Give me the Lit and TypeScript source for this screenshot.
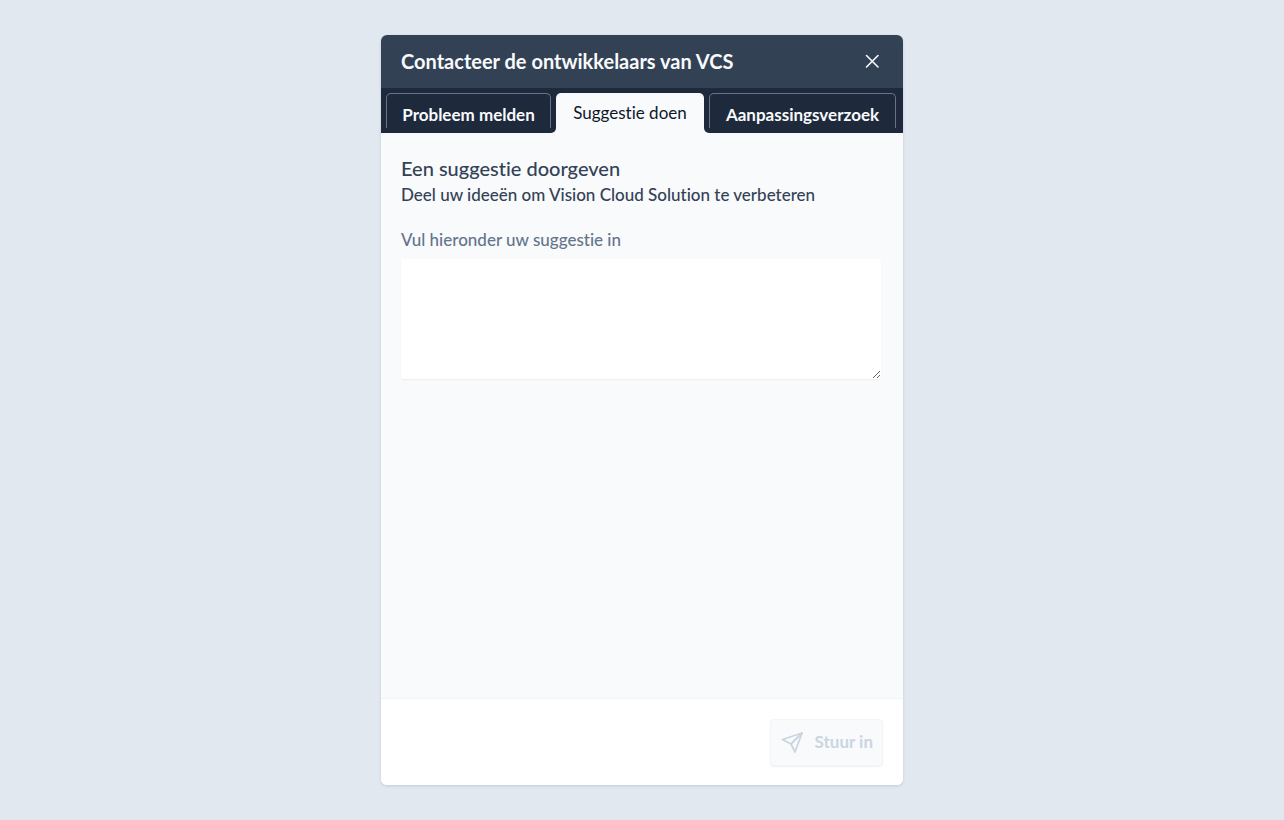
import { LitElement, html, css } from "lit";
import { customElement, state } from "lit/decorators.js";

@customElement("app-root")
export class AppRoot extends LitElement {
  static styles = css`
    :host {
      display: flex;
      justify-content: center;
      box-sizing: border-box;
      min-height: 100vh;
      padding: 35px 16px;
      background: #e2e8f0;
      color: #334155;
      font-family: Lato, Roboto, sans-serif;
      font-size: 17px;
      line-height: 24px;
      font-variant-ligatures: none;
    }
    * {
      box-sizing: border-box;
    }
    button,
    textarea {
      font: inherit;
      font-variant-ligatures: none;
      color: inherit;
      margin: 0;
    }
    svg {
      display: block;
      fill: none;
      stroke: currentColor;
      stroke-linecap: round;
      stroke-linejoin: round;
    }
    .dialog {
      display: flex;
      flex-direction: column;
      width: 100%;
      max-width: 522px;
      border-radius: 6px;
      overflow: hidden;
      background: #f8fafc;
      box-shadow: 0 1px 3px rgba(15, 23, 42, 0.14);
    }
    .header {
      display: flex;
      align-items: center;
      justify-content: space-between;
      padding: 12px 20px 13px;
      background: #334155;
      color: #f8fafc;
    }
    h1,
    h2,
    p {
      margin: 0;
    }
    h1 {
      font-size: 20px;
      line-height: 28px;
      font-weight: 700;
    }
    .close {
      padding: 0;
      border: 0;
      background: none;
      cursor: pointer;
    }
    .close svg {
      stroke-width: 1.6;
    }
    .tabs {
      display: grid;
      grid-template-columns: 175fr 148fr 199fr;
      background: linear-gradient(#1e293b 50%, #f8fafc 50%);
    }
    .cell {
      display: flex;
      padding-top: 5px;
    }
    .before {
      padding: 5px;
      background: #1e293b;
      border-bottom-right-radius: 5px;
    }
    .after {
      padding: 5px 7px 5px 5px;
      background: #1e293b;
      border-bottom-left-radius: 5px;
    }
    .tab {
      flex: 1;
      height: 35px;
      padding: 7px 0 0;
      border: 1px solid #64748b;
      border-bottom: 0;
      border-radius: 5px 5px 0 0;
      background: none;
      color: #f8fafc;
      font-weight: 700;
      cursor: pointer;
      white-space: nowrap;
    }
    .tab[aria-selected="true"] {
      height: 40px;
      padding: 0;
      border: 0;
      background: #f8fafc;
      color: #0f172a;
      font-weight: 400;
    }
    .body {
      flex: 1;
      padding: 20px 22px 20px 20px;
    }
    h2 {
      font-size: 20px;
      line-height: 30px;
      font-weight: 500;
    }
    .intro,
    label {
      font-weight: 500;
    }
    label {
      display: block;
      margin-top: 21px;
      color: #64748b;
    }
    textarea {
      display: block;
      width: 100%;
      height: 120px;
      margin-top: 7px;
      padding: 10px;
      border: 0;
      border-radius: 2px;
      background: #fff;
      box-shadow: 0 1px 2px rgba(15, 23, 42, 0.06);
      outline: none;
      resize: vertical;
    }
    .footer {
      display: flex;
      justify-content: flex-end;
      padding: 20px 20px 19px;
      border-top: 1px solid #f1f5f9;
      background: #fff;
    }
    .send {
      display: flex;
      align-items: center;
      gap: 11px;
      height: 47px;
      padding: 0 9px 2px;
      border: 1px solid #f1f5f9;
      border-radius: 4px;
      background: #f8fafc;
      box-shadow: 0 1px 2px rgba(15, 23, 42, 0.06);
      color: #cbd5e1;
      font-weight: 700;
    }
    .send svg {
      stroke-width: 1.8;
    }
  `;

  @state() private suggestion = "";

  private onInput(e: Event) {
    this.suggestion = (e.target as HTMLTextAreaElement).value;
  }

  render() {
    return html`
      <main class="dialog">
        <header class="header">
          <h1>Contacteer de ontwikkelaars van VCS</h1>
          <button class="close" type="button" aria-label="Sluiten">
            <svg width="22" height="22" viewBox="0 0 22 22">
              <path d="M5.500 5.500l11.500 11.500M17 5.500L5.500 17" />
            </svg>
          </button>
        </header>
        <div class="tabs" role="tablist">
          <div class="cell before" role="presentation">
            <button class="tab" type="button" role="tab" aria-selected="false">Probleem melden</button>
          </div>
          <div class="cell" role="presentation">
            <button class="tab" type="button" role="tab" aria-selected="true">Suggestie doen</button>
          </div>
          <div class="cell after" role="presentation">
            <button class="tab" type="button" role="tab" aria-selected="false">Aanpassingsverzoek</button>
          </div>
        </div>
        <section class="body">
          <h2>Een suggestie doorgeven</h2>
          <p class="intro">Deel uw ideeën om Vision Cloud Solution te verbeteren</p>
          <label for="suggestion">Vul hieronder uw suggestie in</label>
          <textarea id="suggestion" .value=${this.suggestion} @input=${this.onInput}></textarea>
        </section>
        <footer class="footer">
          <button class="send" type="submit" ?disabled=${!this.suggestion.trim()}>
            <svg width="24" height="24" viewBox="0 0 24 24">
              <path d="M22 3L2.500 9.500l8.500 4.500L15 22z" />
              <path d="M22 3L11 14" />
            </svg>
            Stuur in
          </button>
        </footer>
      </main>
    `;
  }
}
